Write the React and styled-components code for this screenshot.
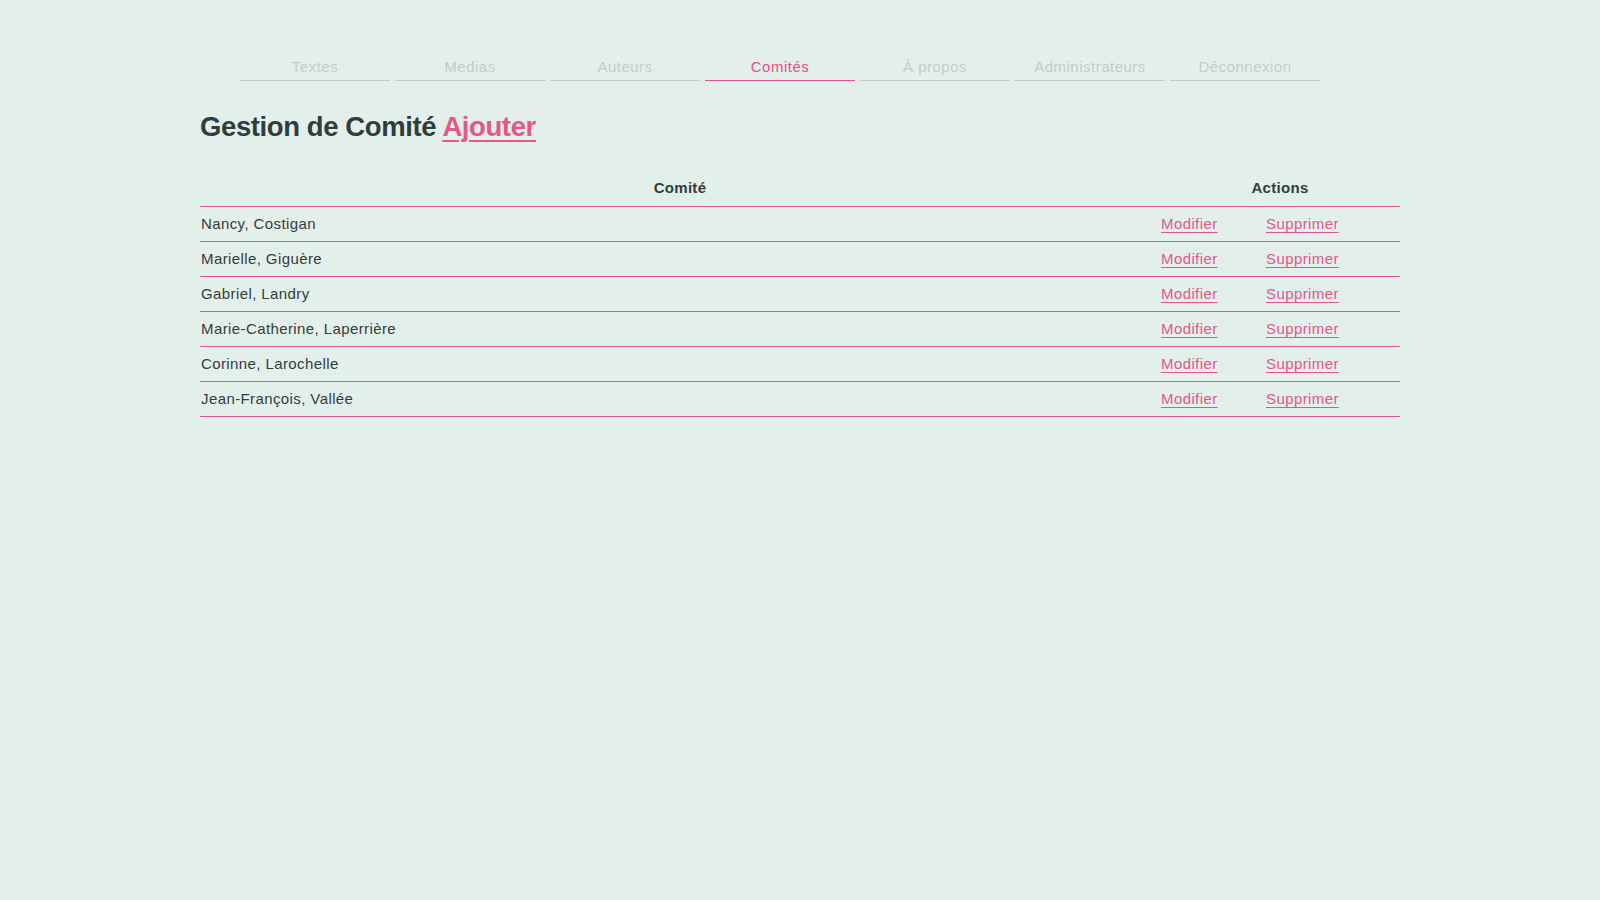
import React from "react";
import styled, { createGlobalStyle } from "styled-components";

const GlobalStyle = createGlobalStyle`
  html, body {
    margin: 0;
    background: #e3efea;
    font-family: "Liberation Sans", Arial, sans-serif;
    color: #2f3e3a;
  }
`;

const pink = "#e5568a";

const Page = styled.div`
  width: 1200px;
  margin: 0 auto;
  padding-top: 54px;
`;

const Nav = styled.ul`
  display: flex;
  gap: 5px;
  list-style: none;
  margin: 0;
  padding: 0 0 0 40px;
`;

const NavItem = styled.li`
  width: 150px;
  text-align: center;
  font-size: 15px;
  letter-spacing: 0.5px;
  line-height: 26px;
  color: ${(p) => (p.$active ? "#e74f88" : "#c3ccc9")};
  border-bottom: 1px solid ${(p) => (p.$active ? "#e74f88" : "#c4cdc9")};
`;

const Title = styled.h1`
  margin: 21px 0 0;
  font-size: 27.5px;
  font-weight: bold;
  line-height: 50px;
  letter-spacing: -0.4px;
  color: #2f3e3a;
`;

const TitleLink = styled.a`
  color: ${pink};
  text-decoration: underline;
  text-decoration-thickness: 2px;
  text-underline-offset: 4px;
`;

const Table = styled.div`
  margin-top: 20px;
  display: grid;
  grid-template-columns: 960px 105px 135px;
`;

const HeadCell = styled.div`
  grid-column: ${(p) => p.$span || "auto"};
  text-align: center;
  font-weight: bold;
  font-size: 15px;
  letter-spacing: 0.3px;
  height: 34px;
  line-height: 32px;
  color: #333d3a;
  border-bottom: 1px solid ${pink};
`;

const Cell = styled.div`
  height: 34px;
  line-height: 34px;
  font-size: 15px;
  letter-spacing: 0.4px;
  padding-left: 1px;
  color: #333d3a;
  border-bottom: 1px solid ${pink};
  white-space: nowrap;
`;

const ActionLink = styled.a`
  color: ${pink};
  text-decoration: underline;
  text-underline-offset: 3px;
  cursor: pointer;
`;

const members = [
  "Nancy, Costigan",
  "Marielle, Giguère",
  "Gabriel, Landry",
  "Marie-Catherine, Laperrière",
  "Corinne, Larochelle",
  "Jean-François, Vallée",
];

const links = ["Textes", "Medias", "Auteurs", "Comités", "À propos", "Administrateurs", "Déconnexion"];

export default function App() {
  return (
    <>
      <GlobalStyle />
      <Page>
        <Nav>
          {links.map((l) => (
            <NavItem key={l} $active={l === "Comités"}>
              {l}
            </NavItem>
          ))}
        </Nav>
        <Title>
          Gestion de Comité <TitleLink>Ajouter</TitleLink>
        </Title>
        <Table>
          <HeadCell>Comité</HeadCell>
          <HeadCell $span="span 2">Actions</HeadCell>
          {members.map((m) => (
            <React.Fragment key={m}>
              <Cell>{m}</Cell>
              <Cell>
                <ActionLink>Modifier</ActionLink>
              </Cell>
              <Cell>
                <ActionLink>Supprimer</ActionLink>
              </Cell>
            </React.Fragment>
          ))}
        </Table>
      </Page>
    </>
  );
}
